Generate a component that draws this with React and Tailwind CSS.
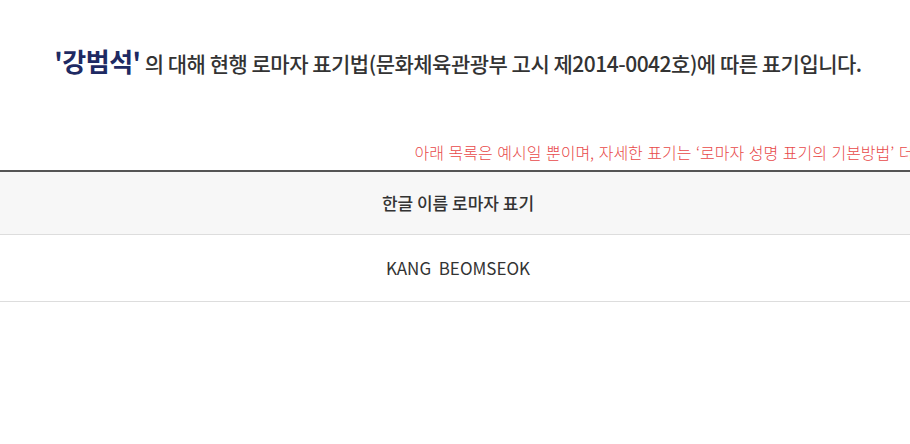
import React from 'react';

const App = () => {
  return (
    <div className="w-[916px] bg-white overflow-hidden" style={{ fontFamily: '"Noto Sans CJK KR", "Noto Sans", sans-serif' }}>
      <div className="pt-[41px] text-center">
        <h2 className="text-[21px] font-medium text-[#333] tracking-[-0.5px]">
          <span className="text-[26px] font-bold text-[#1e2a63]">'강범석'</span> 의 대해 현행 로마자 표기법(문화체육관광부 고시 제2014-0042호)에 따른 표기입니다.
        </h2>
      </div>

      <div className="mt-[60px] flex justify-end">
        <p className="whitespace-nowrap text-[16px] font-light text-[#e84a4a] [word-spacing:1px] -mr-[27px]">
          아래 목록은 예시일 뿐이며, 자세한 표기는 ‘로마자 성명 표기의 기본방법’ 더보기
        </p>
      </div>

      <table className="mt-[6px] w-full border-t-2 border-[#555] border-collapse">
        <thead>
          <tr className="h-[63px] bg-[#f7f7f7] border-b border-[#ddd]">
            <th className="text-[17px] font-medium text-[#333]">한글 이름 로마자 표기</th>
          </tr>
        </thead>
        <tbody>
          <tr className="h-[67px] border-b border-[#ddd]">
            <td className="text-center text-[17px] text-[#333]">KANG&nbsp;&nbsp;BEOMSEOK</td>
          </tr>
        </tbody>
      </table>
      <div className="h-[144px]" />
    </div>
  );
};

export default App;
